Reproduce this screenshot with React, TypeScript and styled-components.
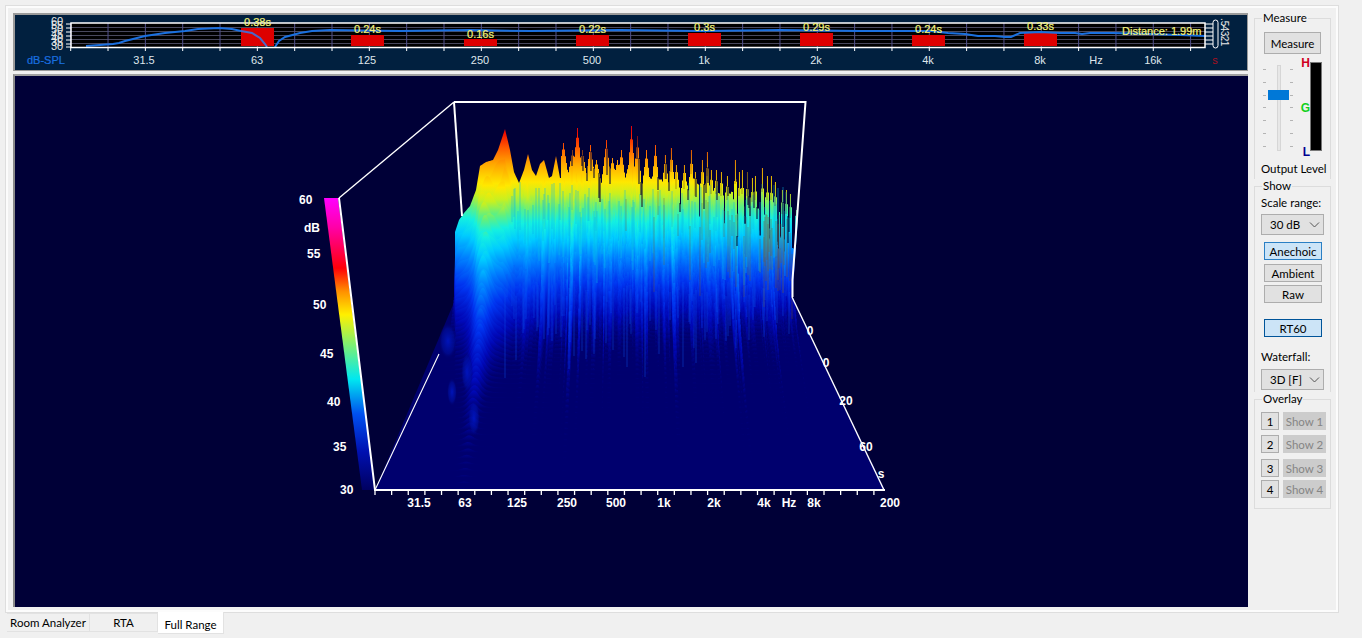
import React, { useMemo } from "react";
import styled, { createGlobalStyle } from "styled-components";

const Global = createGlobalStyle`
  html, body { margin: 0; padding: 0; background: #f0f0f0; overflow: hidden; }
  * { box-sizing: border-box; }
`;

const Page = styled.div`
  width: 1362px; height: 638px; display: flex; flex-direction: column;
  padding: 5px 23px 0 5px; font-family: Lato, "Liberation Sans", sans-serif;
  font-size: 11px; color: #000; background: #f0f0f0;
`;
const TabPane = styled.div`
  height: 608px; display: flex; gap: 6px; padding: 7px 6px 5px 7px;
  background: #f0f0f0; border: 1px solid #dedede; box-shadow: inset 0 0 0 2px #fcfcfc;
`;
const Charts = styled.div`width: 1235px; display: flex; flex-direction: column; gap: 3px;`;
const Strip = styled.div`
  height: 58px; background: #01203f; border: 1px solid #9a9a9a; border-top-width: 2px; border-left-width: 2px;
  overflow: hidden; svg { display: block; margin: -2px 0 0 -2px; }
`;
const Main = styled.div`
  flex: 1; background: #000037; border-left: 2px solid #8a8a8a; border-top: 2px solid #a0a0a0;
  overflow: hidden; svg { display: block; margin: -2px 0 0 -2px; }
`;
const Side = styled.div`width: 77px; display: flex; flex-direction: column; margin-top: -2px;`;
const Group = styled.fieldset<{ $h: number; $last?: boolean }>`
  margin: 0; padding: 0 6px; min-width: 0; height: ${p => p.$h}px; display: flex; flex-direction: column;
  align-items: flex-start; border: 1px solid #dcdcdc; border-bottom: ${p => (p.$last ? "1px solid #dcdcdc" : "none")};
  legend { padding: 0 1px; margin-left: 1px; font-size: 11.5px; line-height: 14px; }
`;
const Btn = styled.div<{ $active?: boolean; $top?: number; $w?: number; $h?: number; $dark?: boolean }>`
  width: ${p => p.$w ?? 58}px; height: ${p => p.$h ?? 18}px; margin-top: ${p => p.$top ?? 0}px; margin-left: 3px;
  flex: none; display: flex; align-items: center; justify-content: center; font-size: 11.5px;
  background: ${p => (p.$active ? "#cce4f7" : "#e1e1e1")};
  border: 1px solid ${p => (p.$dark ? "#005499" : p.$active ? "#2a7fc4" : "#adadad")};
`;
const Field = styled.div<{ $top: number }>`
  margin-top: ${p => p.$top}px; white-space: nowrap; font-size: 11.5px; line-height: 14px;
`;
const Select = styled.div<{ $top: number }>`
  width: 63px; height: 21px; margin-top: ${p => p.$top}px; flex: none; padding: 0 3px 0 8px; display: flex; align-items: center;
  justify-content: space-between; background: #e1e1e1; border: 1px solid #adadad; font-size: 11.5px;
  svg { display: block; }
`;
const LevelRow = styled.div`display: flex; height: 90px; margin: 8px 0 0 2px; width: 62px; flex: none;`;
const Slider = styled.div`
  position: relative; width: 32px; height: 88px; margin-top: 2px; flex: none;
  display: flex; justify-content: center;
`;
const Track = styled.div`width: 4px; height: 86px; margin-top: 1px; background: #e7e7e7; border: 1px solid #d6d6d6;`;
const Thumb = styled.div`position: absolute; left: 5px; top: 26px; width: 21px; height: 10px; background: #0078d7;`;
const Ticks = styled.div<{ $right?: boolean }>`
  position: absolute; top: 5px; bottom: 5px; ${p => (p.$right ? "right: 2px" : "left: 0")}; width: 3px;
  display: flex; flex-direction: column; justify-content: space-between;
  i { display: block; height: 1px; background: #b4b4b4; }
`;
const Letters = styled.div`
  width: 15px; height: 101px; margin-top: -5px; display: flex; flex-direction: column;
  justify-content: space-between; align-items: flex-end; padding-right: 0;
`;
const Letter = styled.span<{ $c: string }>`
  color: ${p => p.$c}; font: bold 12px/12px "Liberation Sans", sans-serif;
`;
const Meter = styled.div`width: 12px; height: 89px; background: #000; border: 1px solid #777; flex: none;`;
const OverlayRow = styled.div<{ $top: number }>`display: flex; gap: 4px; margin-top: ${p => p.$top}px; flex: none;`;
const NumBtn = styled.div`
  width: 18px; height: 18px; display: flex; align-items: center; justify-content: center;
  background: #e1e1e1; border: 1px solid #adadad; font-size: 11.5px;
`;
const ShowBtn = styled.div`
  width: 43px; height: 18px; display: flex; align-items: center; justify-content: center;
  background: #cccccc; color: #858585; font-size: 11.5px;
`;
const TabBar = styled.div`display: flex; align-items: flex-start; padding-left: 2px; font-size: 11.5px;`;
const Tab = styled.div<{ $w: number; $active?: boolean }>`
  width: ${p => p.$w}px; height: ${p => (p.$active ? 22 : 19)}px; margin-top: ${p => (p.$active ? -1 : 0)}px;
  display: flex; align-items: center; justify-content: center; padding-top: ${p => (p.$active ? 3 : 0)}px;
  background: ${p => (p.$active ? "#ffffff" : "#f0f0f0")};
  border: 1px solid #e2e2e2; border-top: ${p => (p.$active ? "none" : "1px solid #e2e2e2")}; border-left: none;
`;

const Chev = () => (
  <svg width="11" height="6" viewBox="0 0 11 6" fill="none" stroke="#555" strokeWidth="1"><path d="M1 .5 5.5 5 10 .5" /></svg>
);

function rng(seed: number) {
  let s = seed >>> 0;
  return () => {
    s = (s + 0x6d2b79f5) >>> 0;
    let t = s;
    t = Math.imul(t ^ (t >>> 15), t | 1);
    t ^= t + Math.imul(t ^ (t >>> 7), t | 61);
    return ((t ^ (t >>> 14)) >>> 0) / 4294967296;
  };
}
const lerpPts = (pts: number[][], x: number) => {
  if (x <= pts[0][0]) return pts[0][1];
  for (let i = 1; i < pts.length; i++) {
    if (x <= pts[i][0]) {
      const [a, b] = pts[i - 1], [c, d] = pts[i];
      return b + ((d - b) * (x - a)) / (c - a);
    }
  }
  return pts[pts.length - 1][1];
};

const lowCrest = [[455,232],[459,220],[464,213],[470,206],[476,190],[480,166],[486,162],[493,160],[498,150],[505,129],[510,150],[514,172],[519,183],[524,170],[528,154],[532,170],[536,176],[540,164],[544,160],[549,178],[552,176],[556,156],[560,178]];
const spikeTops: number[][] = [[563,143],[567,172],[572,150],[577,128],[582,150],[590,145],[596,160],[606,140],[612,158],[617,160],[621,150],[628,165],[631,126],[637,136],[646,150],[655,145],[665,155],[671,148],[676,165],[684,165],[691,150],[695,172],[702,160],[707,152],[711,170],[716,170],[721,172],[727,176],[735,160],[739,172],[742,170],[747,172],[752,178],[755,176],[762,168],[767,176],[771,176],[775,182],[782,190],[786,190],[790,194],[796,210]];
const baseLine = [[560,182],[640,184],[700,192],[740,202],[770,206],[798,222]];

const RAMP: [number, string][] = [
  [300, "#000070"], [288, "#0008b8"], [270, "#0034f0"], [250, "#0080ff"], [232, "#00ccff"], [218, "#14f0e0"], [206, "#60f080"],
  [194, "#c8f020"], [182, "#ffe800"], [164, "#ffa800"], [148, "#ff5c00"], [132, "#f00800"], [112, "#c00030"],
];

function buildWaterfall() {
  const r = rng(77);
  const slices: { d: string; floor: number; id: string }[] = [];
  const N = 46;
  const crest: number[] = [];
  const colN: number[] = [];
  let hold = 0, holdN = 0, dip = 0, dipN = 0;
  for (let x = 455; x <= 798; x++) {
    if (holdN <= 0) { hold = r(); holdN = 1 + Math.floor(r() * 3); }
    holdN--;
    colN.push(hold);
    if (x <= 560) { crest.push(lerpPts(lowCrest, x)); continue; }
    if (dipN <= 0) { dip = r(); dipN = 1 + Math.floor(r() * (x < 680 ? 4 : 2)); }
    dipN--;
    const base = lerpPts(baseLine, x);
    let y = base - 8 + dip * dip * 46;
    const w = 6 - 4.2 * Math.min(1, (x - 560) / 180);
    for (const [sx, sy] of spikeTops) {
      const k = 1 - Math.abs(x - sx) / w;
      if (k > 0) y = Math.min(y, sy + (1 - k) * (base - sy));
    }
    crest.push(y);
  }
  for (let k = 0; k <= N; k++) {
    const t = k / N;
    const tt = t * t * 0.6 + t * 0.4;
    const floorBack = 300 + tt * 190;
    const left = 455 - tt * 30, right = 798 + tt * 30;
    let d = `M${left.toFixed(1)} ${floorBack.toFixed(1)}`;
    for (let i = 0; i < crest.length; i++) {
      const u = i / (crest.length - 1);
      const x = 455 + i;
      const xs = left + (right - left) * u;
      const h0 = 300 - crest[i];
      const bump = Math.exp(-Math.pow((x - 487) / 13, 2));
      const hf = Math.min(1, Math.max(0, (x - 510) / 50));
      const base = 6 + 15 * Math.pow(colN[i], 0.8) * hf + 5 * (1 - hf);
      const rate = base * (1 - 0.6 * bump);
      const n = k === 0 ? 1 : 1 - 0.3 * r() * hf - 0.1 * (1 - hf) * Math.sin(x / 7 + k * 1.3) ** 2;
      let h = h0 * Math.exp(-tt * rate) * n;
      if (k > 0 && xs < 455) h *= 0.25;
      if (k > 0 && x > 785) h *= Math.max(0, 1 - (x - 785) / 10);
      const yy = (floorBack - h).toFixed(1);
      d += `L${xs.toFixed(1)} ${yy}`;
      if (hf >= 1) d += `L${(xs + 1).toFixed(1)} ${yy}`;
    }
    d += `L${right.toFixed(1)} ${floorBack.toFixed(1)}Z`;
    slices.push({ d, floor: floorBack, id: `sl${k}` });
  }
  let mud = "";
  for (let x = 620; x < 796; x += 2) {
    if (r() < 0.22 + (x > 700 ? 0.3 : 0)) {
      const top = lerpPts(baseLine, x) + r() * 40;
      mud += `M${x} ${top.toFixed(0)}V${(top + 20 + r() * 60).toFixed(0)}`;
    }
  }
  let mud2 = "";
  for (let x = 764; x < 788; x += 1) {
    if (r() < 0.75) {
      const top = 214 + r() * 18;
      mud2 += `M${x} ${top.toFixed(0)}V${(top + 34 + r() * 34).toFixed(0)}`;
    }
  }
  let tips = "";
  for (const [sx, sy] of spikeTops) {
    if (sx > 660) tips += `M${sx} ${sy}V${sy + 24}`;
  }
  // streaks that break the smooth bands: cool falls through the yellow, paler and deeper ones through the blue
  let cool = "", deep = "", notch = "";
  for (let x = 505; x < 790; x++) {
    if (r() < 0.34) {
      const top = 182 + r() * 36;
      cool += `M${x} ${top.toFixed(0)}V${(top + 24 + r() * 50).toFixed(0)}`;
    }
    if (r() < 0.3) {
      const top = 262 + r() * 34;
      deep += `M${x} ${top.toFixed(0)}V${(top + 18 + r() * (x < 700 ? 72 : 40)).toFixed(0)}`;
    }
    if (x > 565 && r() < 0.16) {
      const top = crest[x - 455];
      notch += `M${x} ${(top - 1).toFixed(0)}V${(top + 8 + r() * 18).toFixed(0)}`;
    }
  }
  return { slices, mud, mud2, tips, cool, deep, notch };
}

const Y_LABELS = ["60", "55", "50", "45", "40", "35", "30"];
const BARS = [[241, 28, "0.38s", 26], [351, 35, "0.24s", 33], [464, 39, "0.16s", 38], [576, 35, "0.22s", 33], [688, 33, "0.3s", 31], [800, 33, "0.29s", 31], [912, 35, "0.24s", 33], [1024, 33, "0.33s", 30]] as [number, number, string, number][];
const BOT = [["31.5", 144], ["63", 257], ["125", 367], ["250", 480], ["500", 592], ["1k", 704], ["2k", 816], ["4k", 928], ["8k", 1040], ["Hz", 1096], ["16k", 1153]] as [string, number][];
const CURVE1 = "M86 46 100 45 113 44 119 43 125 41 145 36 165 33 185 31 198 29 219 28 232 29 241 31";
const CURVE1B = "M241 31 252 33 260 38 265 44 267 47";
const CURVE2 = "M275 47 279 41 285 37 300 33 312 31 330 30 400 31 470 30 530 31 620 30 700 31 780 30 860 31 930 31 948 33 965 34 978 36 995 36 1005 37 1011 37 1020 33 1040 32 1060 33 1075 33 1082 34 1090 33 1113 33 1150 34 1180 35 1205 36";

const TopStrip = () => {
  const ticks = Array.from({ length: 31 }, (_, i) => 70.7 + i * 37.33);
  return (
    <svg width="1235" height="58" viewBox="13 13 1235 58" fontFamily="'Liberation Sans', sans-serif" fontSize="11">
      <rect x="71" y="23" width="1134" height="24" fill="#000" />
      {[27, 31, 35, 39, 43].map(y => <line key={y} x1="71" x2="1205" y1={y + 0.5} y2={y + 0.5} stroke="#48485c" />)}
      {ticks.filter(x => x < 1205).map((x, i) => <line key={i} x1={x} x2={x} y1="23" y2="47" stroke="#50508c" />)}
      {BARS.map(([x, y]) => <rect key={x} x={x} y={y} width="33" height={46 - y} fill="#dd0000" />)}
      <path d={CURVE1} fill="none" stroke="#1a70e0" strokeWidth="2" />
      <path d={CURVE1B} fill="none" stroke="#4a68c8" strokeWidth="2" />
      <path d={CURVE2} fill="none" stroke="#1a70e0" strokeWidth="2" />
      <rect x="71" y="23" width="1134" height="24.5" fill="none" stroke="#fff" strokeWidth="1.5" />
      {ticks.filter(x => x <= 1205).map((x, i) => <line key={i} x1={x} x2={x} y1="47" y2="51" stroke="#fff" />)}
      {[24, 28, 32, 36, 40, 44, 47].map(y => <line key={y} x1="66" x2="71" y1={y} y2={y} stroke="#fff" />)}
      {Y_LABELS.map((l, i) => <text key={l} x="51" y={25 + i * 4.2} fill="#e6e6e6">{l}</text>)}
      {BARS.map(([x, , t, y]) => <text key={x} x={x + 16.5} y={y} textAnchor="middle" fill="#f4f478" stroke="#f4f478" strokeWidth=".2">{t}</text>)}
      <text x="1122" y="35" fill="#f4f478" stroke="#f4f478" strokeWidth=".2">Distance: 1.99m</text>
      <rect x="1213" y="20" width="5" height="28" rx="2.5" fill="none" stroke="#fff" />
      {[24, 28, 32, 36, 40, 44].map(y => <line key={y} x1="1205" x2="1213" y1={y} y2={y} stroke="#fff" />)}
      {[".5", ".4", ".3", ".2", ".1"].map((l, i) => (
        <text key={l} x="0" y="0" fontSize="10" fill="#e6e6e6" transform={`translate(1221 ${18 + i * 5}) rotate(90)`}>{l}</text>
      ))}
      <text x="27" y="64" fill="#1a70e0" stroke="#1a70e0" strokeWidth=".2">dB-SPL</text>
      {BOT.map(([t, x]) => <text key={t} x={x} y="64" textAnchor="middle" fill="#dfe6ec">{t}</text>)}
      <text x="1215" y="64" textAnchor="middle" fill="#aa1020">s</text>
    </svg>
  );
};

const SCALE: [string, number, number][] = [["60", 299, 204], ["dB", 304, 232], ["55", 307, 258], ["50", 313, 309], ["45", 320, 358], ["40", 327, 406], ["35", 333, 451], ["30", 340, 494]];
const XL: [string, number][] = [["31.5", 419], ["63", 465], ["125", 517], ["250", 567], ["500", 616], ["1k", 664], ["2k", 714], ["4k", 764], ["Hz", 789], ["8k", 814], ["200", 890]];
const TL: [string, number, number][] = [["0", 810, 335], ["0", 826, 367], ["20", 846, 405], ["60", 866, 451], ["s", 881, 478]];
const BLOBS: [number, number, number, number][] = [[448, 341, 9, 18], [467, 372, 6, 20], [474, 418, 6, 18], [452, 392, 5, 14]];

const Waterfall = () => {
  const { slices, mud, mud2, tips, cool, deep, notch } = useMemo(buildWaterfall, []);
  const xt = Array.from({ length: 31 }, (_, i) => 375 + i * 16.63);
  return (
    <svg width="1235" height="533" viewBox="13 74 1235 533" fontFamily="'Liberation Sans', sans-serif" fontWeight="bold" fontSize="12">
      <defs>
        <linearGradient id="bar" x1="0" x2="0" y1="198" y2="490" gradientUnits="userSpaceOnUse">
          <stop offset="0" stopColor="#ff00ff" />
          <stop offset=".1" stopColor="#ff00a8" />
          <stop offset=".24" stopColor="#ff0008" />
          <stop offset=".32" stopColor="#ff9000" />
          <stop offset=".4" stopColor="#fff000" />
          <stop offset=".5" stopColor="#80f070" />
          <stop offset=".62" stopColor="#00e8f0" />
          <stop offset=".74" stopColor="#0050f0" />
          <stop offset=".87" stopColor="#0010b0" />
          <stop offset="1" stopColor="#000060" />
        </linearGradient>
        <radialGradient id="blob">
          <stop offset="0" stopColor="#0018c8" stopOpacity=".85" />
          <stop offset=".7" stopColor="#0010a0" stopOpacity=".55" />
          <stop offset="1" stopColor="#000070" stopOpacity="0" />
        </radialGradient>
        <clipPath id="wall">
          <polygon points="300,100 806,100 792.5,297 885,490 300,490" />
        </clipPath>
        {slices.map(s => (
          <linearGradient key={s.id} id={s.id} x1="0" x2="0" y1={s.floor} y2={s.floor - 188} gradientUnits="userSpaceOnUse">
            {RAMP.map(([y, c]) => <stop key={y} offset={`${(300 - y) / 188}`} stopColor={c} />)}
          </linearGradient>
        ))}
      </defs>
      <polygon points="455,300 792,297 885,490 375,490" fill="#00006e" />
      <g clipPath="url(#wall)">
        {slices.map(s => <path key={s.id} d={s.d} fill={`url(#${s.id})`} />)}
        <path d={cool} stroke="#08b8e8" strokeOpacity=".5" strokeWidth="1" fill="none" />
        <path d={deep} stroke="#0a58f0" strokeOpacity=".42" strokeWidth="1" fill="none" />
        <path d={mud} stroke="#7a5a30" strokeOpacity=".4" strokeWidth="1" fill="none" />
        <path d={mud2} stroke="#80582a" strokeOpacity=".5" strokeWidth="1" fill="none" />
        <path d={tips} stroke="#5a1810" strokeOpacity=".4" strokeWidth="1" fill="none" />
        <path d={notch} stroke="#000037" strokeWidth="1" fill="none" />
        {BLOBS.map(([cx, cy, rx, ry]) => <ellipse key={cy} cx={cx} cy={cy} rx={rx} ry={ry} fill="url(#blob)" />)}
      </g>
      <polygon points="324,198 338,198 375,490 362,490" fill="url(#bar)" />
      <g fill="none" stroke="#fff">
        <path d="M339 198 454 102" strokeWidth="1.4" />
        <path d="M454 102 805.5 102 792.5 280 792.5 297" strokeWidth="2" />
        <path d="M454 102 462 216" strokeWidth="2" />
        <path d="M339 198 375 490 885 490" strokeWidth="2" />
        <path d="M375 490 439 354" strokeWidth="1.1" />
        <path d="M792 297 884 490" strokeWidth="1.4" />
        {xt.map((x, i) => <line key={i} x1={x} x2={x} y1="490" y2="495" strokeWidth="1.3" />)}
      </g>
      <g fill="#fff">
        {SCALE.map(([t, x, y]) => <text key={t} x={x} y={y}>{t}</text>)}
        {XL.map(([t, x]) => <text key={t} x={x} y="507" textAnchor="middle">{t}</text>)}
        {TL.map(([t, x, y], i) => <text key={i} x={x} y={y} textAnchor="middle">{t}</text>)}
      </g>
    </svg>
  );
};

export default function App() {
  return (
    <Page>
      <Global />
      <TabPane>
        <Charts>
          <Strip><TopStrip /></Strip>
          <Main><Waterfall /></Main>
        </Charts>
        <Side>
          <Group $h={168}>
            <legend>Measure</legend>
            <Btn $top={7} $w={57} $h={22}>Measure</Btn>
            <LevelRow>
              <Slider>
                <Ticks>{Array.from({ length: 7 }, (_, i) => <i key={i} />)}</Ticks>
                <Track />
                <Ticks $right>{Array.from({ length: 7 }, (_, i) => <i key={i} />)}</Ticks>
                <Thumb />
              </Slider>
              <Letters>
                <Letter $c="#d00020">H</Letter>
                <Letter $c="#10d020">G</Letter>
                <Letter $c="#000090">L</Letter>
              </Letters>
              <Meter />
            </LevelRow>
            <Field $top={10}>Output Level</Field>
          </Group>
          <Group $h={213}>
            <legend>Show</legend>
            <Field $top={3}>Scale range:</Field>
            <Select $top={4}>30 dB<Chev /></Select>
            <Btn $active $top={7}>Anechoic</Btn>
            <Btn $top={4}>Ambient</Btn>
            <Btn $top={3}>Raw</Btn>
            <Btn $active $dark $top={16}>RT60</Btn>
            <Field $top={13}>Waterfall:</Field>
            <Select $top={5}>3D [F]<Chev /></Select>
          </Group>
          <Group $h={117} $last>
            <legend>Overlay</legend>
            <OverlayRow $top={6}><NumBtn>1</NumBtn><ShowBtn>Show 1</ShowBtn></OverlayRow>
            <OverlayRow $top={5}><NumBtn>2</NumBtn><ShowBtn>Show 2</ShowBtn></OverlayRow>
            <OverlayRow $top={6}><NumBtn>3</NumBtn><ShowBtn>Show 3</ShowBtn></OverlayRow>
            <OverlayRow $top={3}><NumBtn>4</NumBtn><ShowBtn>Show 4</ShowBtn></OverlayRow>
          </Group>
        </Side>
      </TabPane>
      <TabBar>
        <Tab $w={83}>Room Analyzer</Tab>
        <Tab $w={68}>RTA</Tab>
        <Tab $w={66} $active>Full Range</Tab>
      </TabBar>
    </Page>
  );
}
